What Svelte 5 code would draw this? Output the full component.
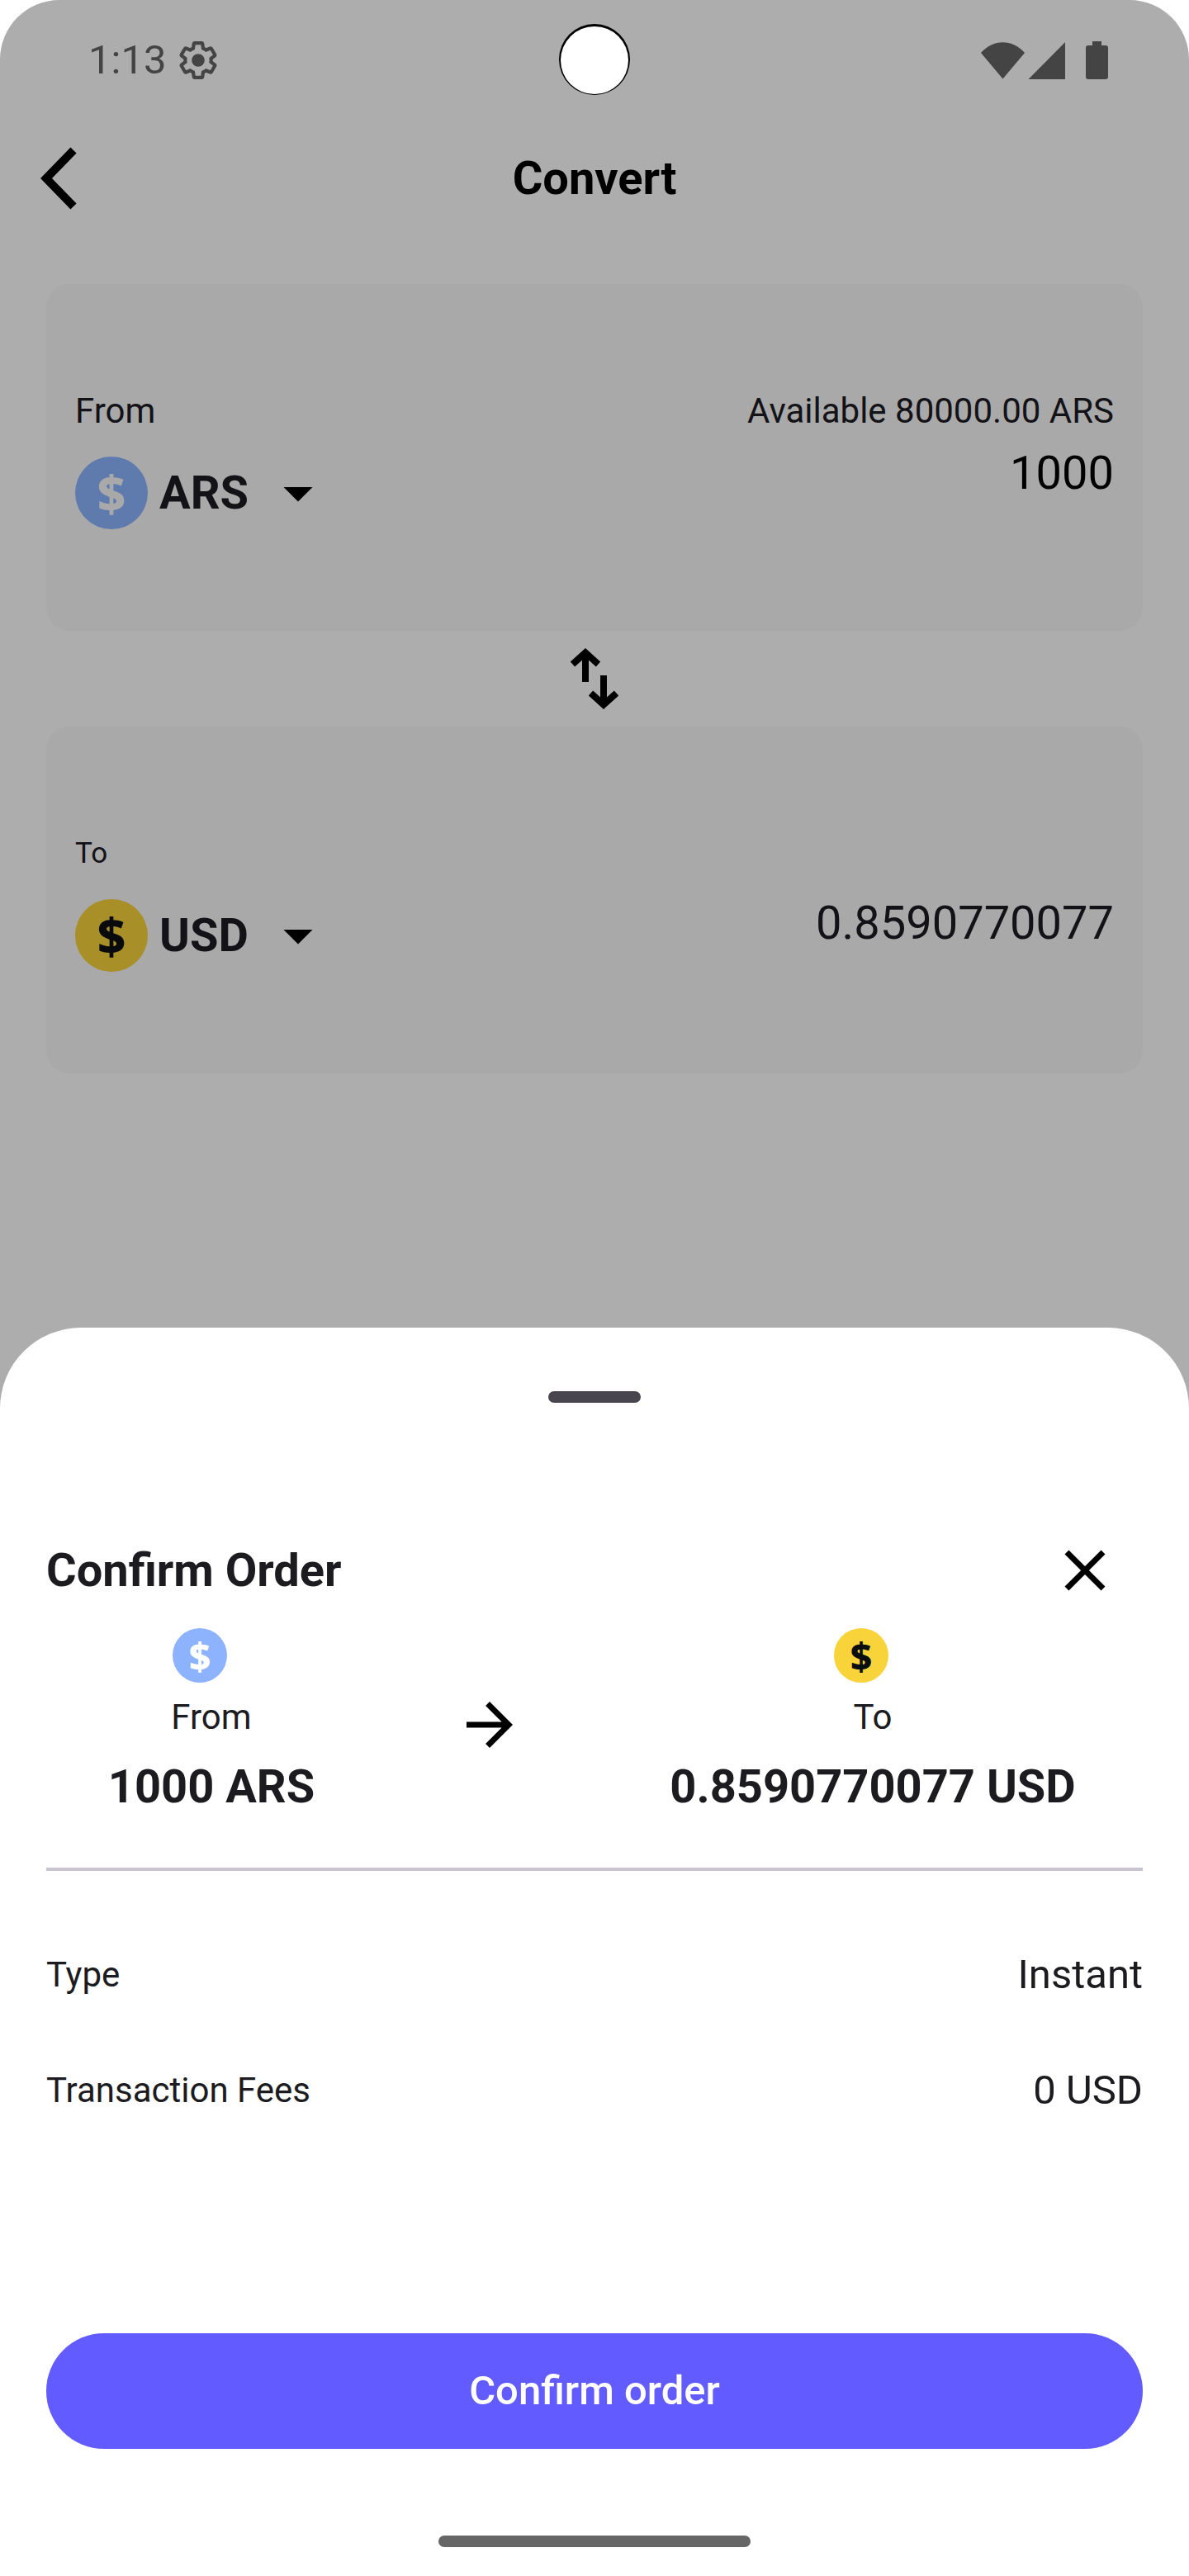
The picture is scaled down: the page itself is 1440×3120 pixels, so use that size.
<script>
  let from = $state('ARS');
  let to = $state('USD');
  let amount = $state('1000');

  const currencies = ['ARS', 'USD'];
  const received = '0.8590770077';
  const details = [
    { label: 'Type', value: 'Instant' },
    { label: 'Transaction Fees', value: '0 USD' },
  ];
</script>

{#snippet caret()}
  <svg class="caret" viewBox="0 0 24 24" aria-hidden="true"><path d="M7 10l5 5 5-5z" /></svg>
{/snippet}

<div class="phone">
  <div class="status">
    <div class="status-side start">
      <span class="clock">1:13</span>
      <svg class="gear" viewBox="1 1 22 22" aria-hidden="true">
        <path
          d="M19.43 12.98c.04-.32.07-.64.07-.98 0-.34-.03-.66-.07-.98l2.11-1.65c.19-.15.24-.42.12-.64l-2-3.46c-.09-.16-.26-.25-.44-.25-.06 0-.12.01-.17.03l-2.49 1c-.52-.4-1.08-.73-1.69-.98l-.38-2.65C14.46 2.18 14.25 2 14 2h-4c-.25 0-.46.18-.49.42l-.38 2.65c-.61.25-1.17.59-1.69.98l-2.49-1c-.06-.02-.12-.03-.18-.03-.17 0-.34.09-.43.25l-2 3.46c-.13.22-.07.49.12.64l2.11 1.65c-.04.32-.07.65-.07.98 0 .33.03.66.07.98l-2.11 1.65c-.19.15-.24.42-.12.64l2 3.46c.09.16.26.25.44.25.06 0 .12-.01.17-.03l2.49-1c.52.4 1.08.73 1.69.98l.38 2.65c.03.24.24.42.49.42h4c.25 0 .46-.18.49-.42l.38-2.65c.61-.25 1.17-.59 1.69-.98l2.49 1c.06.02.12.03.18.03.17 0 .34-.09.43-.25l2-3.46c.12-.22.07-.49-.12-.64l-2.11-1.65z"
          fill="none" stroke="currentColor" stroke-width="2" />
        <circle cx="12" cy="12" r="3.75" fill="currentColor" />
      </svg>
    </div>
    <svg class="camera" viewBox="0 0 88 88" aria-hidden="true">
      <circle cx="44" cy="43" r="43" fill="#000" />
      <circle cx="44" cy="44" r="41" fill="#fff" />
    </svg>
    <div class="status-side end">
      <svg class="signals" viewBox="0 0 154 46" aria-hidden="true">
        <path d="M0 14C15 -3 38 -3 53 14L26.500 45.500Z" />
        <path d="M102 1V46H57.500Z" />
        <path d="M135 0h11v5h5a3 3 0 0 1 3 3v35a3 3 0 0 1-3 3h-21a3 3 0 0 1-3-3V8a3 3 0 0 1 3-3h5z" />
      </svg>
    </div>
  </div>

  <header class="topbar">
    <button class="icon-button back" aria-label="Back">
      <svg viewBox="0 0 44 76" aria-hidden="true"><path d="M40 4L7 38L40 72" fill="none" stroke="#000" stroke-width="10" /></svg>
    </button>
    <h1>Convert</h1>
  </header>

  <main>
    <section class="card">
      <div class="side">
        <label class="label" for="from-currency">From</label>
        <div class="picker">
          <span class="coin dim blue" aria-hidden="true">$</span>
          <select id="from-currency" bind:value={from}>
            {#each currencies as code}<option value={code}>{code}</option>{/each}
          </select>
          {@render caret()}
        </div>
      </div>
      <div class="side values">
        <label class="label" for="amount">Available 80000.00 ARS</label>
        <input id="amount" type="text" inputmode="decimal" bind:value={amount} />
      </div>
    </section>

    <button class="icon-button swap" aria-label="Swap currencies">
      <svg viewBox="0 0 58 76" aria-hidden="true">
        <path d="M18 42V7M2.500 20.500L18 6.500L33.500 20.500M40 34V69M24.500 55.500L40 69.500L55.500 55.500" fill="none" stroke="#000" stroke-width="8" />
      </svg>
    </button>

    <section class="card">
      <div class="side">
        <label class="label small" for="to-currency">To</label>
        <div class="picker">
          <span class="coin dim yellow" aria-hidden="true">$</span>
          <select id="to-currency" bind:value={to}>
            {#each currencies as code}<option value={code}>{code}</option>{/each}
          </select>
          {@render caret()}
        </div>
      </div>
      <output class="received" for="amount">{received}</output>
    </section>
  </main>

  <section class="sheet" role="dialog" aria-labelledby="sheet-title">
    <div class="handle"></div>
    <div class="sheet-head">
      <h2 id="sheet-title">Confirm Order</h2>
      <button class="icon-button close" aria-label="Close">
        <svg viewBox="0 0 24 24" aria-hidden="true"><path d="M19 6.410L17.590 5 12 10.590 6.410 5 5 6.410 10.590 12 5 17.590 6.410 19 12 13.410 17.590 19 19 17.590 13.410 12z" /></svg>
      </button>
    </div>

    <div class="exchange">
      <div class="leg">
        <div class="coin-slot"><span class="coin mini blue" aria-hidden="true">$</span></div>
        <span class="label">From</span>
        <strong>{amount} {from}</strong>
      </div>
      <svg class="arrow" viewBox="0 0 24 24" aria-hidden="true"><path d="M12 4l-1.410 1.410L16.170 11H4v2h12.170l-5.580 5.590L12 20l8-8z" /></svg>
      <div class="leg">
        <div class="coin-slot"><span class="coin mini yellow" aria-hidden="true">$</span></div>
        <span class="label">To</span>
        <strong>{received} {to}</strong>
      </div>
    </div>

    <hr />

    <dl>
      {#each details as row}
        <div class="detail">
          <dt>{row.label}</dt>
          <dd>{row.value}</dd>
        </div>
      {/each}
    </dl>

    <button class="confirm">Confirm order</button>
    <div class="home"></div>
  </section>
</div>

<style>
  :global(body) {
    margin: 0;
    background: #fff;
  }

  .phone {
    display: flex;
    flex-direction: column;
    min-height: 100vh;
    background: #adadad;
    border-radius: 72px 72px 0 0;
    font-family: Roboto, 'Liberation Sans', sans-serif;
    font-size: 56px;
    line-height: 84px;
    color: #131217;
  }

  button,
  select,
  input {
    margin: 0;
    padding: 0;
    border: 0;
    background: none;
    font: inherit;
    color: inherit;
  }

  svg {
    display: block;
  }

  .icon-button {
    display: flex;
    align-items: center;
    justify-content: center;
  }

  .status {
    display: grid;
    grid-template-columns: 1fr auto 1fr;
    align-items: center;
    height: 146px;
    padding: 0 98px;
    box-sizing: border-box;
    color: #444;
  }

  .status-side {
    display: flex;
    align-items: center;
    gap: 16px;
  }

  .status-side.start {
    padding-left: 9px;
  }

  .status-side.end {
    justify-content: flex-end;
  }

  .clock {
    font-size: 49px;
  }

  .gear {
    width: 46px;
    height: 46px;
  }

  .camera {
    width: 88px;
    height: 88px;
  }

  .signals {
    width: 154px;
    height: 46px;
    fill: currentColor;
  }

  .topbar {
    display: grid;
    grid-template-columns: 1fr auto 1fr;
    align-items: center;
    height: 140px;
    padding: 0 49px;
    color: #000;
  }

  .back {
    justify-self: start;
  }

  .back svg {
    width: 44px;
    height: 76px;
  }

  h1,
  h2 {
    margin: 0;
    font-size: 56px;
    font-weight: 700;
  }

  main {
    padding: 58px 56px 56px;
  }

  .card {
    display: flex;
    justify-content: space-between;
    align-items: flex-start;
    padding: 126px 35px 123px;
    border-radius: 28px;
    background: #a9a9a9;
  }

  .side {
    display: flex;
    flex-direction: column;
    gap: 27px;
  }

  .values {
    gap: 5px;
    align-items: flex-end;
  }

  .label {
    font-size: 42px;
    line-height: 56px;
  }

  .label.small {
    font-size: 35px;
  }

  .picker {
    display: flex;
    align-items: center;
    gap: 14px;
    height: 88px;
  }

  .coin {
    display: flex;
    align-items: center;
    justify-content: center;
    width: 88px;
    height: 88px;
    border-radius: 50%;
    font-family: 'Noto Sans', 'Open Sans', sans-serif;
    font-weight: 800;
    font-size: 60px;
    line-height: 60px;
  }

  .coin.mini {
    width: 66px;
    height: 66px;
    font-size: 46px;
  }

  .blue {
    background: #8db3ff;
    color: #fff;
  }

  .yellow {
    background: #f8d33a;
    color: #0b0e11;
  }

  .dim.blue {
    background: #5f7bae;
    color: #a9a9a9;
  }

  .dim.yellow {
    background: #a88f28;
    color: #080a0c;
  }

  select {
    appearance: none;
    width: 112px;
    height: 84px;
    font-weight: 700;
  }

  .caret {
    width: 84px;
    height: 84px;
    fill: #000;
    pointer-events: none;
  }

  input {
    width: 350px;
    height: 84px;
    text-align: right;
    color: #000;
  }

  .swap {
    width: 116px;
    height: 116px;
    margin: 0 auto;
  }

  .swap svg {
    width: 58px;
    height: 76px;
  }

  .received {
    padding-top: 70px;
  }

  .sheet {
    display: flex;
    flex-direction: column;
    margin-top: auto;
    padding: 77px 56px 35px;
    border-radius: 98px 98px 0 0;
    background: #fff;
    color: #1c1b1f;
  }

  .handle {
    width: 112px;
    height: 14px;
    margin: 0 auto 133px;
    border-radius: 7px;
    background: #49454f;
  }

  .sheet-head {
    display: flex;
    align-items: center;
    justify-content: space-between;
  }

  .close {
    width: 140px;
    height: 140px;
  }

  .close svg,
  .arrow {
    width: 84px;
    height: 84px;
    fill: #000;
  }

  .exchange {
    display: grid;
    grid-template-columns: 400fr 274fr 654fr;
    align-items: center;
    justify-items: center;
  }

  .leg {
    display: flex;
    flex-direction: column;
    align-items: center;
    gap: 14px;
  }

  .coin-slot {
    padding-right: 28px;
  }

  strong {
    font-weight: 700;
  }

  hr {
    width: 100%;
    height: 4px;
    margin: 56px 0 84px;
    border: 0;
    background: #cac4d0;
  }

  dl {
    display: flex;
    flex-direction: column;
    gap: 56px;
    margin: 0 0 252px;
  }

  .detail {
    display: flex;
    align-items: center;
    justify-content: space-between;
  }

  dt {
    font-size: 42px;
  }

  dd {
    margin: 0;
    font-size: 49px;
  }

  .confirm {
    height: 140px;
    border-radius: 70px;
    background: #625bff;
    color: #fff;
    font-size: 49px;
    font-weight: 500;
  }

  .home {
    width: 378px;
    height: 14px;
    margin: 105px auto 0;
    border-radius: 7px;
    background: #666;
  }
</style>
